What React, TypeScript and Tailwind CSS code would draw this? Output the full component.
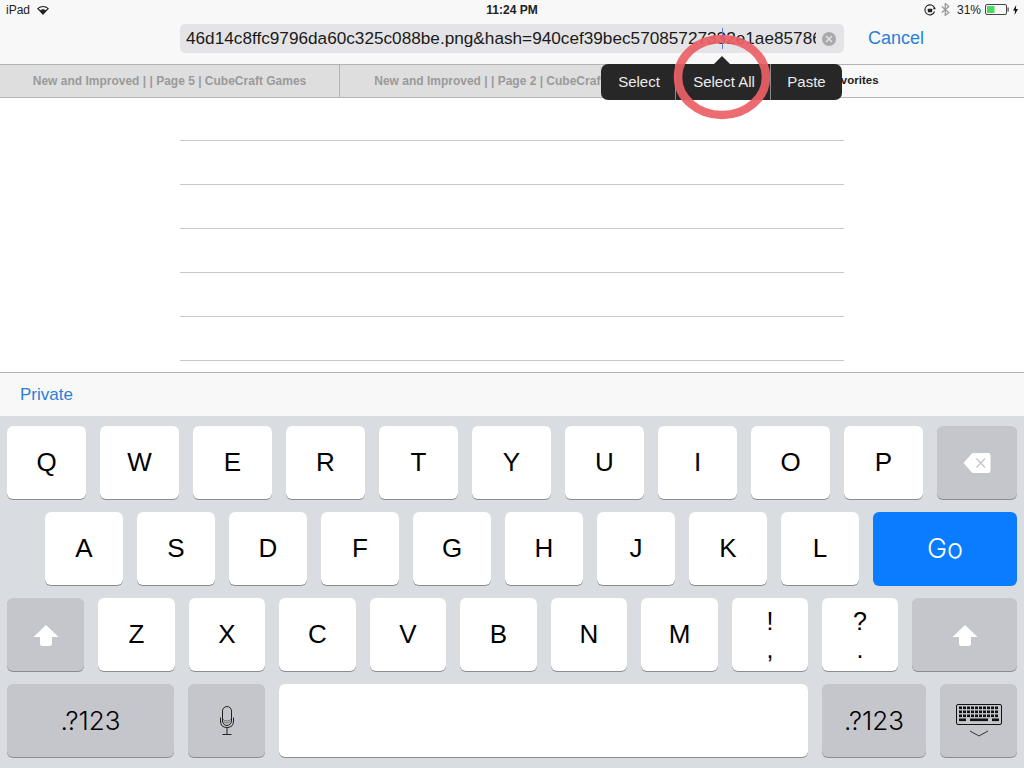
import type { ReactNode } from "react";

const FONT = "font-['Liberation_Sans',Arial,sans-serif]";

function Key({ width, dark, children }: { width: number; dark?: boolean; children?: ReactNode }) {
  return (
    <div
      style={{ width }}
      className={`h-[73px] shrink-0 rounded-[6px] flex items-center justify-center text-[26px] text-black shadow-[0_1px_0_#8b8c90] ${
        dark ? "bg-[#c5c6cb]" : "bg-white"
      }`}
    >
      {children}
    </div>
  );
}

function ShiftIcon() {
  return (
    <svg width="26" height="24" viewBox="0 0 26 24" fill="white">
      <path d="M13 2 L25.5 14 L19 14 L19 20.5 Q19 23 16.5 23 L9.5 23 Q7 23 7 20.5 L7 14 L0.5 14 Z" />
    </svg>
  );
}

function DeleteIcon() {
  return (
    <svg width="28" height="20" viewBox="0 0 28 20">
      <path d="M0.5 10 L8.5 1 Q9.4 0 10.5 0 L25.5 0 Q27.5 0 27.5 2 L27.5 18 Q27.5 20 25.5 20 L10.5 20 Q9.4 20 8.5 19 Z" fill="white" />
      <path d="M13.5 5.5 L22 14.5 M22 5.5 L13.5 14.5" stroke="#c5c6cb" strokeWidth="1.4" />
    </svg>
  );
}

function MicIcon() {
  return (
    <svg width="14" height="29" viewBox="0 0 14 29" fill="none" stroke="#222" strokeWidth="1">
      <rect x="2.5" y="0.5" width="9" height="19" rx="4.5" />
      <path d="M3 13 Q4 15 7 15 Q10 15 11 13 M3.2 15 Q5 17 7 17 Q9 17 10.8 15" stroke="#777" />
      <path d="M0.5 11.5 L0.5 15 Q0.5 21.5 7 21.5 Q13.5 21.5 13.5 15 L13.5 11.5" />
      <path d="M7 21.5 L7 28 M2.5 28.5 L11.5 28.5" />
    </svg>
  );
}

function KeyboardIcon() {
  const rows = [2.5, 6.5, 10.5];
  const cols = [3, 7, 11, 15, 19, 23, 27, 31, 35, 39];
  return (
    <svg width="46" height="34" viewBox="0 0 46 34" fill="none">
      <rect x="0.5" y="0.5" width="45" height="20" rx="1.5" stroke="#111" />
      {rows.map((y) =>
        cols.map((x) => <rect key={`${x}-${y}`} x={x} y={y} width="3" height="2.6" fill="#111" />),
      )}
      <rect x="14" y="14.5" width="18" height="2.6" fill="#111" />
      <rect x="3" y="14.5" width="7" height="2.6" fill="#111" />
      <rect x="36" y="14.5" width="7" height="2.6" fill="#111" />
      <path d="M14 27 L23 32 L32 27" stroke="#333" />
    </svg>
  );
}

function StatusIcons() {
  return (
    <div className="flex items-center text-[12px] text-[#222]">
      {/* orientation lock */}
      <svg width="12" height="12" viewBox="0 0 12 12" fill="none" className="mr-[5px]">
        <path d="M10.6 7.5 A5 5 0 1 1 10.6 4.2" stroke="#222" strokeWidth="1.1" />
        <path d="M11.8 5.2 L8.8 5.2 L10.6 2.8 Z" fill="#222" />
        <rect x="3.8" y="4.8" width="4.4" height="3.4" rx="0.4" fill="#222" />
      </svg>
      {/* bluetooth */}
      <svg width="9" height="13" viewBox="0 0 9 13" fill="none" stroke="#9a9a9a" strokeWidth="1.3" className="mr-[7px]">
        <path d="M0.8 3.4 L7.8 9.4 L4.3 12.4 L4.3 0.6 L7.8 3.6 L0.8 9.6" />
      </svg>
      <span className="mr-[4px]">31%</span>
      {/* battery */}
      <svg width="24" height="11" viewBox="0 0 24 11" fill="none" className="mr-[4px]">
        <rect x="0.5" y="0.5" width="21" height="10" rx="1.5" stroke="#444" />
        <rect x="2" y="2" width="7.5" height="7" fill="#4cd964" />
        <rect x="22.5" y="3.5" width="1.2" height="4" fill="#444" />
      </svg>
      {/* charging bolt */}
      <svg width="5" height="10" viewBox="0 0 5 10" fill="#111">
        <path d="M3.2 0 L0 5.6 L2 5.6 L1.6 10 L5 4 L2.9 4 Z" />
      </svg>
    </div>
  );
}

export default function App() {
  return (
    <div className={`relative w-[1024px] h-[768px] overflow-hidden bg-white flex flex-col ${FONT}`}>
      <header className="h-[64px] shrink-0 bg-[#f8f8f8] flex flex-col">
        <div className="h-[20px] grid grid-cols-3 items-center pl-[6px] pr-[6px] pb-[1px] text-[12px] text-[#222]">
          <div className="flex items-center gap-[7px]">
            <span>iPad</span>
            <svg width="12" height="10" viewBox="0 0 12 10" fill="#222">
              <path d="M6 10 L0 3.4 Q6 -1.2 12 3.4 Z M6 8 L1.6 3.4 Q6 0.4 10.4 3.4 Z" fillRule="evenodd" />
              <path d="M6 9 L2.9 5.4 Q6 3.2 9.1 5.4 Z" />
            </svg>
          </div>
          <div className="text-center font-bold text-[12px]">11:24 PM</div>
          <div className="flex justify-end">
            <StatusIcons />
          </div>
        </div>
        <div className="flex-1 flex items-start pl-[180px] pt-[4px]">
          <div className="w-[664px] h-[29px] rounded-[5px] bg-[#e4e4e6] flex items-center pl-[6px] pr-[8px]">
            <div className="w-[630px] overflow-hidden whitespace-nowrap text-[17.2px] leading-[29px] text-[#1a1a1a]">
              46d14c8ffc9796da60c325c088be.png&amp;hash=940cef39bec57085727332e1ae85786
            </div>
            <div className="ml-auto w-[14px] h-[14px] rounded-full bg-[#a9a9ad] flex items-center justify-center">
              <svg width="8" height="8" viewBox="0 0 8 8" stroke="#e4e4e6" strokeWidth="1.5">
                <path d="M1 1 L7 7 M7 1 L1 7" />
              </svg>
            </div>
          </div>
          <span className="ml-[24px] text-[18px] leading-[29px] text-[#2a7fd6]">Cancel</span>
        </div>
      </header>

      <nav className="h-[34px] shrink-0 grid grid-cols-[340px_342px_342px] border-y border-[#b4b4b4] text-[12px] font-bold">
        <div className="bg-[#dedede] text-[#9a9a9a] pb-[1px] flex items-center justify-center border-r border-[#b4b4b4]">
          New and Improved | | Page 5 | CubeCraft Games
        </div>
        <div className="bg-[#dedede] text-[#9a9a9a] pb-[1px] flex items-center justify-center">
          New and Improved | | Page 2 | CubeCraft Games
        </div>
        <div className="bg-[#f8f8f8] text-[#222] text-[11.5px] flex items-center justify-center">Favorites</div>
      </nav>

      <main className="flex-1 bg-white pl-[180px]">
        <div className="w-[664px] h-[43px] border-b border-[#c8c8c8]" />
        <div className="w-[664px] h-[44px] border-b border-[#c8c8c8]" />
        <div className="w-[664px] h-[44px] border-b border-[#c8c8c8]" />
        <div className="w-[664px] h-[44px] border-b border-[#c8c8c8]" />
        <div className="w-[664px] h-[44px] border-b border-[#c8c8c8]" />
        <div className="w-[664px] h-[44px] border-b border-[#c8c8c8]" />
      </main>

      <div className="h-[44px] shrink-0 border-t border-[#b4b4b4] bg-[#f8f8f8] flex items-center pl-[20px] text-[17px] text-[#2a7fd6]">
        Private
      </div>

      <div className="h-[352px] shrink-0 bg-[#d9dce1] pt-[10px] pl-[7px] flex flex-col gap-[13px]">
        <div className="flex gap-[14px]">
          <Key width={79}>Q</Key>
          <Key width={79}>W</Key>
          <Key width={79}>E</Key>
          <Key width={79}>R</Key>
          <Key width={79}>T</Key>
          <Key width={79}>Y</Key>
          <Key width={79}>U</Key>
          <Key width={79}>I</Key>
          <Key width={79}>O</Key>
          <Key width={79}>P</Key>
          <Key width={80} dark>
            <DeleteIcon />
          </Key>
        </div>
        <div className="flex gap-[14px] pl-[38px]">
          <Key width={78}>A</Key>
          <Key width={78}>S</Key>
          <Key width={78}>D</Key>
          <Key width={78}>F</Key>
          <Key width={78}>G</Key>
          <Key width={78}>H</Key>
          <Key width={78}>J</Key>
          <Key width={78}>K</Key>
          <Key width={78}>L</Key>
          <div className="w-[144px] h-[74px] mb-[-1px] rounded-[6px] bg-[#0a7cff] flex items-center justify-center font-['Inter',sans-serif] font-light text-[27px] text-white">
            Go
          </div>
        </div>
        <div className="flex gap-[14px]">
          <Key width={77} dark>
            <ShiftIcon />
          </Key>
          <Key width={77}>Z</Key>
          <Key width={76}>X</Key>
          <Key width={77}>C</Key>
          <Key width={76}>V</Key>
          <Key width={77}>B</Key>
          <Key width={76}>N</Key>
          <Key width={77}>M</Key>
          <Key width={76}>
            <div className="flex flex-col items-center text-[25px] leading-[28px]">
              <span>!</span>
              <span>,</span>
            </div>
          </Key>
          <Key width={76}>
            <div className="flex flex-col items-center text-[25px] leading-[28px]">
              <span>?</span>
              <span>.</span>
            </div>
          </Key>
          <Key width={105} dark>
            <ShiftIcon />
          </Key>
        </div>
        <div className="flex gap-[14px]">
          <Key width={167} dark>
            <span className="font-['Inter',sans-serif] font-light text-[26px]">.?123</span>
          </Key>
          <Key width={77} dark>
            <MicIcon />
          </Key>
          <Key width={529} />
          <Key width={104} dark>
            <span className="font-['Inter',sans-serif] font-light text-[26px]">.?123</span>
          </Key>
          <Key width={77} dark>
            <KeyboardIcon />
          </Key>
        </div>
      </div>

      {/* edit menu over the tab bar */}
      <div className="absolute left-[601px] top-[64px] w-[241px] h-[36px] rounded-[7px] bg-[#272727] flex text-[15px] text-[#ececec]">
        <div className="w-[75px] pl-[2px] flex items-center justify-center border-r border-[#8a8a8a]">Select</div>
        <div className="w-[95px] pl-[2px] flex items-center justify-center border-r border-[#8a8a8a]">Select All</div>
        <div className="flex-1 flex items-center justify-center">Paste</div>
      </div>
      <div className="absolute left-[714px] top-[56px] w-0 h-0 border-x-[8px] border-x-transparent border-b-[8px] border-b-[#272727]" />
      <div className="absolute left-[722px] top-[28px] w-px h-[21px] bg-[#5b7fd0]" />

      {/* red annotation ring */}
      <svg className="absolute left-[668px] top-[30px] blur-[0.6px]" width="108" height="94" viewBox="0 0 108 94" fill="none">
        <ellipse cx="54" cy="47" rx="44" ry="38" stroke="#ec5f66" strokeWidth="8.5" opacity="0.92" />
      </svg>
    </div>
  );
}
